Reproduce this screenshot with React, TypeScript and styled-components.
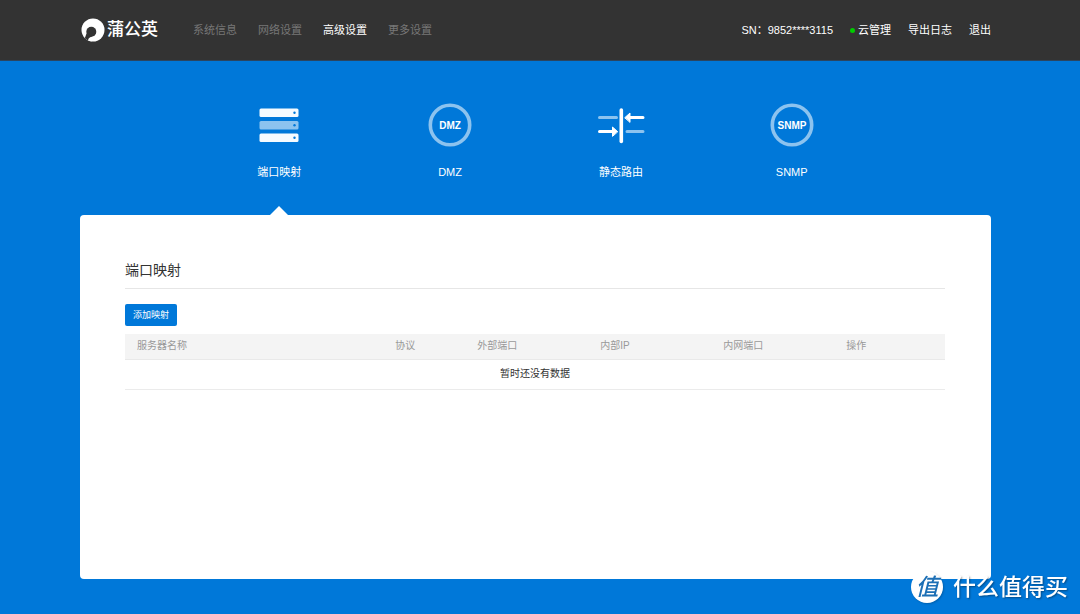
import React from "react";
import styled, { createGlobalStyle, css } from "styled-components";

const blue = "#0078d9";

const GlobalStyle = createGlobalStyle`
  * { box-sizing: border-box; }
  body {
    margin: 0;
    background: ${blue};
    color: #333;
    font-family: "Liberation Sans", "Noto Sans CJK SC", sans-serif;
    font-size: 11px;
    line-height: 16px;
  }
  a { color: inherit; text-decoration: none; }
`;

const Page = styled.div`
  min-height: 100vh;
`;

const Header = styled.header`
  display: flex;
  align-items: center;
  height: 61px;
  padding: 0 89px 0 80px;
  background: #333;
  border-bottom: 1px solid #2b4560;
`;

const Brand = styled.a`
  display: flex;
  align-items: center;
  gap: 1px;
  color: #fff;
  font-size: 17px;
  font-weight: 500;
  line-height: 26px;
`;

const MainNav = styled.nav`
  display: flex;
  gap: 21px;
  margin-left: 35px;
`;

const NavLink = styled.a<{ $active?: boolean }>`
  color: ${(p) => (p.$active ? "#fff" : "#777")};
`;

const Account = styled.div`
  display: flex;
  align-items: center;
  gap: 17px;
  margin-left: auto;
  color: #fff;
`;

const CloudLink = styled.a`
  display: flex;
  align-items: center;
  gap: 3px;
`;

const StatusDot = styled.span`
  width: 5px;
  height: 5px;
  border-radius: 50%;
  background: #0c0;
`;

const Main = styled.main`
  padding: 0 89px 35px 80px;
`;

const Tabs = styled.nav`
  display: grid;
  grid-template-columns: repeat(4, 1fr);
  width: 75%;
  margin: 0 auto;
`;

const Tab = styled.a<{ $active?: boolean }>`
  position: relative;
  display: flex;
  flex-direction: column;
  align-items: center;
  gap: 15px;
  height: 154px;
  padding-top: 40px;
  color: #fff;
  ${(p) =>
    p.$active &&
    css`
      &::after {
        content: "";
        position: absolute;
        bottom: 0;
        border: 9px solid transparent;
        border-top: 0;
        border-bottom-color: #fff;
      }
    `}
`;

const TabIcon = styled.svg`
  width: 48px;
  height: 48px;
`;

const IconText = styled.text`
  fill: #fff;
  font-family: "Liberation Sans", sans-serif;
  font-size: 10px;
  font-weight: 700;
  text-anchor: middle;
`;

const Card = styled.section`
  min-height: 364px;
  padding: 44px 46px 44px 45px;
  border-radius: 4px;
  background: #fff;
`;

const Title = styled.h1`
  margin: 0 0 15px;
  padding-bottom: 6px;
  border-bottom: 1px solid #e6e6e6;
  font-size: 14px;
  font-weight: 400;
  line-height: 23px;
`;

const AddButton = styled.button`
  display: block;
  height: 22px;
  margin-bottom: 8px;
  padding: 0 8px;
  border: 0;
  border-radius: 2px;
  background: ${blue};
  color: #fff;
  font: inherit;
  font-size: 9px;
`;

const Table = styled.table`
  width: 100%;
  table-layout: fixed;
  border-collapse: collapse;
  font-size: 10px;
`;

const HeadCell = styled.th<{ $width: string }>`
  width: ${(p) => p.$width};
  height: 25px;
  padding: 0 12px;
  border-bottom: 1px solid #e9e9e9;
  background: #f4f4f4;
  color: #999;
  font-weight: 400;
  text-align: left;
`;

const EmptyCell = styled.td`
  height: 30px;
  padding: 0;
  border-bottom: 1px solid #ebebeb;
  text-align: center;
`;

const Watermark = styled.div`
  position: fixed;
  right: 12px;
  bottom: 10px;
  display: flex;
  align-items: center;
  gap: 10px;
  color: #fff;
  font-size: 23px;
  font-weight: 500;
  line-height: 34px;
  text-shadow: 1px 1px 2px rgba(0, 0, 0, 0.4);
`;

const Badge = styled.span`
  width: 32px;
  height: 32px;
  border-radius: 50%;
  background: #fff;
  box-shadow: 1px 1px 2px rgba(0, 0, 0, 0.2);
  color: #1c6fb5;
  font-size: 23px;
  font-style: italic;
  line-height: 32px;
  text-align: center;
  text-shadow: none;
`;

const columns = [
  { name: "服务器名称", width: "31.5%" },
  { name: "协议", width: "10%" },
  { name: "外部端口", width: "15%" },
  { name: "内部IP", width: "15%" },
  { name: "内网端口", width: "15%" },
  { name: "操作", width: "13.5%" },
];

function LogoMark() {
  return (
    <svg width="26" height="26" viewBox="0 0 26 26" aria-hidden="true">
      <circle cx="13" cy="13" r="11.5" fill="#fff" />
      <circle cx="11.3" cy="14.800" r="5" fill="#333" />
      <path d="M6.500 16.500L4.800 21.300L8.200 23.800L9.600 20.800L12.500 19.500z" fill="#333" />
      <path d="M8.800 21.300L12 19.800L12 24.300L8 23.400z" fill="#fff" />
    </svg>
  );
}

function ServerIcon() {
  return (
    <TabIcon viewBox="0 0 48 48" aria-hidden="true">
      {[7.5, 20, 32.5].map((y, i) => (
        <g key={y}>
          <rect x="4.500" y={y} width="39" height="8.500" rx="1.500" fill={i === 1 ? "#8cc3ef" : "#f5fbff"} />
          <circle cx="39.500" cy={y + 4.2} r="1.200" fill={blue} />
        </g>
      ))}
    </TabIcon>
  );
}

function RoundIcon({ label }: { label: string }) {
  return (
    <TabIcon viewBox="0 0 48 48" aria-hidden="true">
      <circle cx="24" cy="24" r="19.700" fill="none" stroke="#8cc3ef" strokeWidth="3.600" />
      <IconText x="24" y="28">{label}</IconText>
    </TabIcon>
  );
}

function RouteIcon() {
  return (
    <TabIcon viewBox="0 0 48 48" fill="none" strokeLinecap="round" strokeWidth="3" aria-hidden="true">
      <path d="M2.500 16.500H19.500M30 30.500H46" stroke="#8cc3ef" />
      <path d="M24.300 9V40.500" stroke="#fff" strokeWidth="3.600" />
      <path d="M33 16.500H46M2.500 30.500H16" stroke="#fff" />
      <path d="M28 16.500l5-4.500v9zM20.500 30.500l-5-4.500v9z" fill="#fff" stroke="#fff" strokeWidth="1" strokeLinejoin="round" />
    </TabIcon>
  );
}

export default function App() {
  return (
    <Page>
      <GlobalStyle />
      <Header>
        <Brand href="#">
          <LogoMark />
          蒲公英
        </Brand>
        <MainNav>
          <NavLink href="#">系统信息</NavLink>
          <NavLink href="#">网络设置</NavLink>
          <NavLink href="#" $active>高级设置</NavLink>
          <NavLink href="#">更多设置</NavLink>
        </MainNav>
        <Account>
          <span>SN：9852****3115</span>
          <CloudLink href="#">
            <StatusDot />
            云管理
          </CloudLink>
          <a href="#">导出日志</a>
          <a href="#">退出</a>
        </Account>
      </Header>
      <Main>
        <Tabs>
          <Tab href="#" $active>
            <ServerIcon />
            端口映射
          </Tab>
          <Tab href="#">
            <RoundIcon label="DMZ" />
            DMZ
          </Tab>
          <Tab href="#">
            <RouteIcon />
            静态路由
          </Tab>
          <Tab href="#">
            <RoundIcon label="SNMP" />
            SNMP
          </Tab>
        </Tabs>
        <Card>
          <Title>端口映射</Title>
          <AddButton type="button">添加映射</AddButton>
          <Table>
            <thead>
              <tr>
                {columns.map((c) => (
                  <HeadCell key={c.name} $width={c.width} scope="col">{c.name}</HeadCell>
                ))}
              </tr>
            </thead>
            <tbody>
              <tr>
                <EmptyCell colSpan={columns.length}>暂时还没有数据</EmptyCell>
              </tr>
            </tbody>
          </Table>
        </Card>
      </Main>
      <Watermark>
        <Badge>值</Badge>
        什么值得买
      </Watermark>
    </Page>
  );
}
